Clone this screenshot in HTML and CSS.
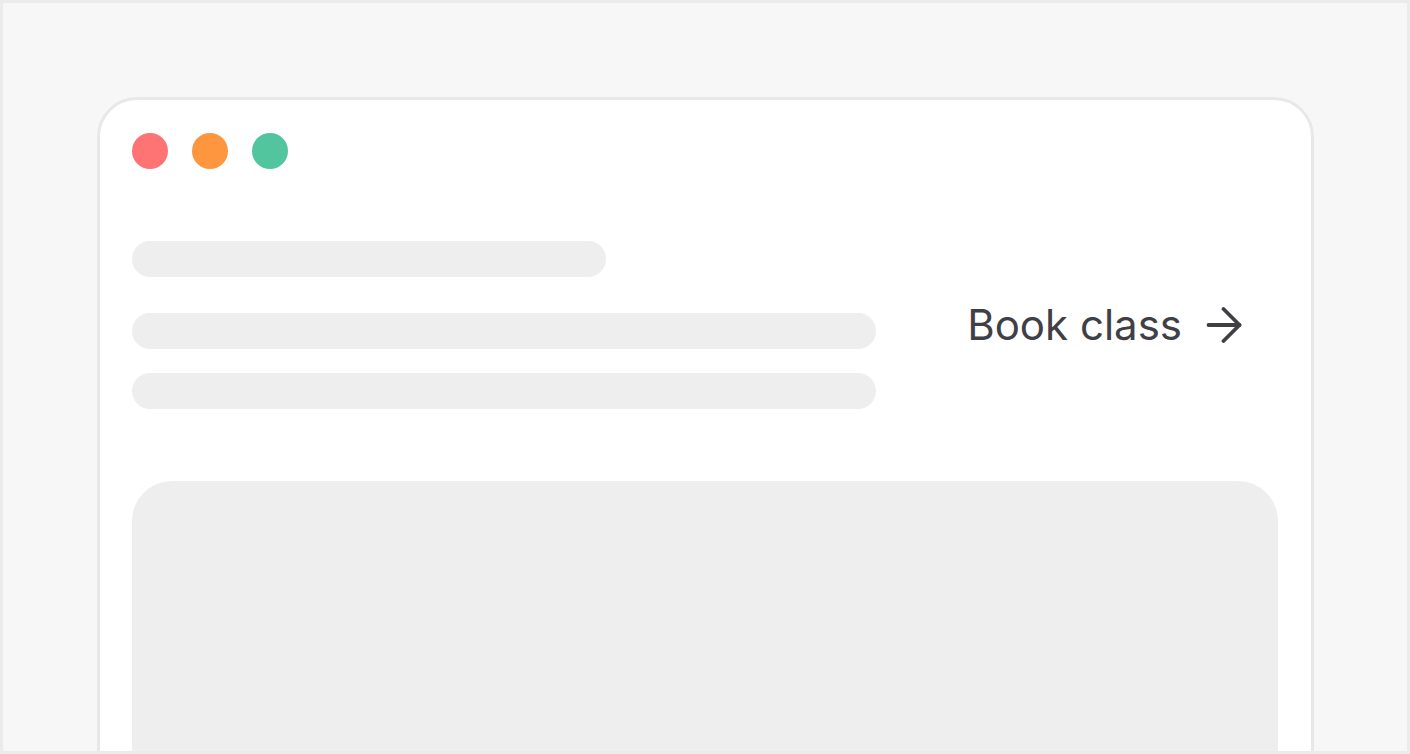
FILE: index.html
```html
<!DOCTYPE html>
<html>
<head>
<meta charset="utf-8">
<link rel="stylesheet" href="styles.css">
</head>
<body>
<div class="frame">
  <div class="window">
    <div class="dots">
      <span class="dot red"></span>
      <span class="dot orange"></span>
      <span class="dot green"></span>
    </div>
    <div class="row">
      <div class="bars">
        <div class="bar short"></div>
        <div class="bar long first"></div>
        <div class="bar long"></div>
      </div>
      <a class="link" href="#">
        <span class="label">Book class</span>
        <svg class="arrow" width="36" height="36" viewBox="0 0 36 36" fill="none" stroke="#3f4045" stroke-width="3.8" stroke-linecap="round" stroke-linejoin="round">
          <path d="M2.5 18H33.5"/>
          <path d="M17.5 2L33.5 18L17.5 34"/>
        </svg>
      </a>
    </div>
    <div class="card"></div>
  </div>
</div>
</body>
</html>
```

FILE: styles.css
```css
* { box-sizing: border-box; }
html, body { margin: 0; padding: 0; }
body {
  font-family: Inter, "Noto Sans", sans-serif;
  background: #f7f7f7;
}
.frame {
  width: 1410px;
  height: 754px;
  border: 3px solid #ebebeb;
  background: #f7f7f7;
  overflow: hidden;
  padding: 94px 0 0 94px;
}
.window {
  width: 1217px;
  height: 800px;
  background: #ffffff;
  border: 3px solid #e8e8e8;
  border-radius: 40px 40px 0 0;
  padding: 33px 33px 0 32px;
}
.dots {
  display: flex;
  gap: 24px;
  height: 36px;
}
.dot {
  width: 36px;
  height: 36px;
  border-radius: 50%;
  display: block;
}
.red { background: #fe7474; }
.orange { background: #fe963f; }
.green { background: #52c59f; }
.row {
  margin-top: 72px;
  display: flex;
  align-items: center;
  justify-content: space-between;
}
.bars {
  width: 744px;
  display: flex;
  flex-direction: column;
}
.bar {
  height: 36px;
  border-radius: 18px;
  background: #eeeeee;
}
.bar.short { width: 474px; }
.bar.first { margin-top: 36px; margin-bottom: 24px; }
.link {
  display: flex;
  align-items: center;
  gap: 24px;
  color: #3f4045;
  text-decoration: none;
  font-size: 42px;
  line-height: 50px;
  margin-right: 36px;
}
.arrow { display: block; }
.card {
  margin-top: 72px;
  height: 400px;
  background: #eeeeee;
  border-radius: 40px 40px 0 0;
}
```
